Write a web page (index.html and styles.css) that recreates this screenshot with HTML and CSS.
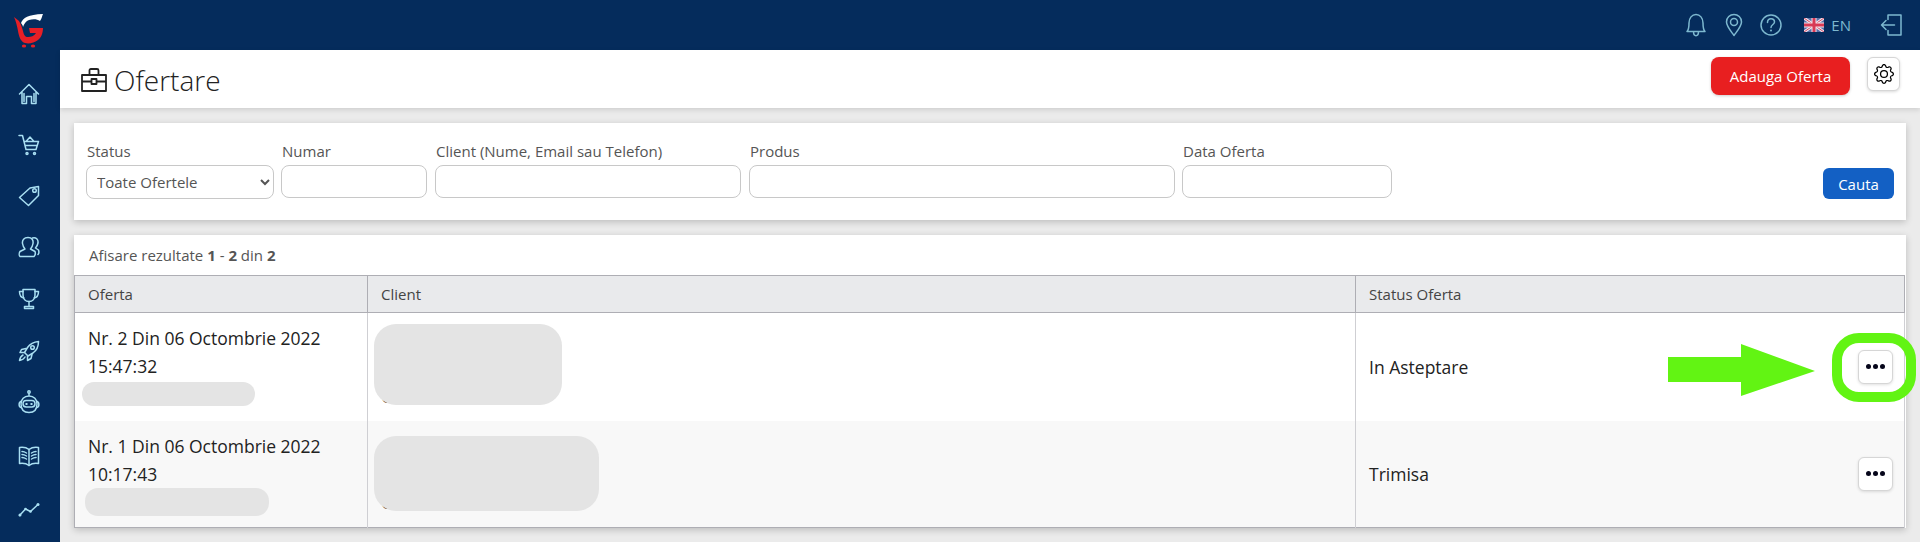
FILE: index.html
```html
<!DOCTYPE html>
<html lang="ro">
<head>
<meta charset="utf-8">
<title>Ofertare</title>
<link rel="stylesheet" href="styles.css">
</head>
<body>
<div class="app">
  <aside class="sidebar">
    <div class="logo">
      <svg width="32" height="36" viewBox="0 0 32 36">
        <path class="logo-red" d="M1 4L6 8C8 11 9 15 10 18C11 22 12 24 15 24C18 24 21 23 23 20L17 20L16 15L30 15C30 20 28 25 25 27C21 30 16 31 12 30C8 29 6 24 5 18C4 13 3 8 1 4Z"/>
        <path class="logo-white" d="M8 10C10 5 15 1.500 30 1C29 3 29 5 27 8C24 6 20 6 16 7C13 8 11 11 10 14C10 13 9 11 8 10Z"/>
        <ellipse class="logo-red" cx="11" cy="33" rx="2.200" ry="1.500"/>
        <ellipse class="logo-red" cx="20" cy="33" rx="2.200" ry="1.500"/>
      </svg>
    </div>
    <nav class="nav">
      <a class="nav-item"><svg width="22" height="22" viewBox="0 0 22 22"><path d="M1.500 11L11 1.500L20.500 11M4 9V20.500H8.500V13.500H13.500V20.500H18V9"/><path d="M6 10.500V18.500M16 10.500V18.500"/></svg></a>
      <a class="nav-item"><svg width="22" height="22" viewBox="0 0 22 22"><path d="M1 1.500H4.500L8 15.500H18L20.500 7.500H6M8 7.500L12 3L16 7.500M7.500 11.500H19"/><circle cx="9" cy="19.500" r="1"/><circle cx="16.500" cy="19.500" r="1"/></svg></a>
      <a class="nav-item"><svg width="22" height="22" viewBox="0 0 22 22"><path d="M1.500 12.500L12 3L20.500 1.500V10.500L10.500 20.500Z"/><circle cx="16.500" cy="5.500" r="1.800"/></svg></a>
      <a class="nav-item"><svg width="22" height="22" viewBox="0 0 22 22"><path d="M10 1.500C14 1.500 15.500 4 15 7.500C14.500 10.500 13.500 12 12.500 13L17 15.500C17.500 17 17 19.500 16 20.500H2C1 19.500 1 17 2 15.500L7 13C6 12 5 10.500 4.500 7.500C4 4 6 1.500 10 1.500Z"/><path d="M14.500 2C18 1 20.500 3.500 20 7C19.500 9.500 18.500 11 17.500 12L20.500 14C21 15.500 21 17.500 20 18.500"/></svg></a>
      <a class="nav-item nudge-1"><svg width="22" height="22" viewBox="0 0 22 22"><path d="M5 1.500H17V7C17 11 14.500 13.500 11 13.500C7.500 13.500 5 11 5 7Z"/><path d="M5 3.500H1.500C1.500 7 3 9.500 6 10M17 3.500H20.500C20.500 7 19 9.500 16 10M11 13.500V18M6.500 20.500H15.500V18.500H6.500Z"/></svg></a>
      <a class="nav-item nudge-1"><svg width="22" height="22" viewBox="0 0 22 22"><path d="M20.500 1.500C15.500 2 12 4 9.500 7.500L6.500 12.500L10 16L15 13C18.500 10.500 20.500 6.500 20.500 1.500Z"/><circle cx="14.500" cy="7.500" r="1.800"/><path d="M8 8.500L3.500 9.500L2 12.500H6.500M14 14.500L13 18.500L9.500 20.500V16M5 15C3 16 2 18 1.500 20.500C4 20 6 19 7 17"/></svg></a>
      <a class="nav-item"><svg width="24" height="24" viewBox="0 0 24 24"><circle cx="12" cy="2" r="1.200"/><path d="M12 3.500V6M12 6C7 6 4 9.500 4 14C4 19.500 7 22.500 12 22.500C17 22.500 20 19.500 20 14C20 9.500 17 6 12 6Z"/><path d="M4 11.500C1.500 12 1.500 17 4 17.500M20 11.500C22.500 12 22.500 17 20 17.500"/><rect x="6" y="10.500" width="12" height="6.500" rx="3.200"/><path class="eyes" d="M8.500 13H10.500V15H8.500ZM13.500 13H15.500V15H13.500Z"/></svg></a>
      <a class="nav-item nudge-3"><svg width="22" height="22" viewBox="0 0 22 22"><path d="M1.500 2.500C5 2 8.500 2.500 11 4.500C13.500 2.500 17 2 20.500 2.500V18.500C17 18 13.500 18.500 11 20.500C8.500 18.500 5 18 1.500 18.500Z"/><path d="M11 4.500V20.500M4 6.500C5.500 6.500 7 7 8.500 8M4 9.500C5.500 9.500 7 10 8.500 11M4 12.500C5.500 12.500 7 13 8.500 14M18 6.500C16.500 6.500 15 7 13.500 8M18 9.500C16.500 9.500 15 10 13.500 11M18 12.500C16.500 12.500 15 13 13.500 14"/></svg></a>
      <a class="nav-item nudge-2"><svg width="22" height="22" viewBox="0 0 22 22"><path d="M1.500 17.500L7.500 11L12.500 13.500L20 6.500"/><circle class="dot" cx="2" cy="17" r="1.500"/><circle class="dot" cx="7.500" cy="11" r="1.300"/><circle class="dot" cx="12.500" cy="13.500" r="1.300"/><circle class="dot" cx="20" cy="6.500" r="1.500"/></svg></a>
    </nav>
  </aside>

  <div class="main">
    <header class="topbar">
      <svg class="top-icon" width="22" height="24" viewBox="0 0 22 24"><path d="M2 18.500C4 16.500 4 14 4 10C4 5 7 1.500 11 1.500C15 1.500 18 5 18 10C18 14 18 16.500 20 18.500ZM8.500 18.500C8.500 24 13.500 24 13.500 18.500"/></svg>
      <svg class="top-icon pin" width="18" height="24" viewBox="0 0 18 24"><path d="M9 22.500C5 17 1.500 13 1.500 9C1.500 4.500 5 1.500 9 1.500C13 1.500 16.500 4.500 16.500 9C16.500 13 13 17 9 22.500Z"/><circle cx="9" cy="9" r="3.500"/></svg>
      <svg class="top-icon" width="22" height="22" viewBox="0 0 22 22"><circle cx="11" cy="11" r="10"/><path d="M7.500 8.500C7.500 6 9 4.700 11 4.700C13 4.700 14.500 6 14.500 8C14.500 10.500 11 10.500 11 13.500"/><circle class="dot-top" cx="11" cy="16.500" r="1"/></svg>
      <div class="lang">
        <svg class="flag" width="20" height="14" viewBox="0 0 20 14"><rect width="20" height="14" fill="#5a6fa8"/><path d="M0 0L20 14M20 0L0 14" stroke="#f3e3ea" stroke-width="3"/><path d="M0 0L20 14M20 0L0 14" stroke="#cf4a66" stroke-width="1"/><path d="M10 0V14M0 7H20" stroke="#f3e3ea" stroke-width="5"/><path d="M10 0V14M0 7H20" stroke="#d83a55" stroke-width="3"/></svg>
        <span class="lang-label">EN</span>
      </div>
      <svg class="top-icon logout" width="22" height="22" viewBox="0 0 22 22"><path d="M8 5.500V1H21V21H8V16.500M14.500 11H1.500M6 6.500L1.500 11L6 15.500"/></svg>
    </header>

    <section class="pagehead">
      <h1 class="title">
        <svg class="title-icon" width="26" height="24" viewBox="0 0 26 24"><path d="M1 7H25V23H1ZM8.500 7V2.500C8.500 1.500 9 1 10 1H16C17 1 17.500 1.500 17.500 2.500V7M1 13.500H10.500M15.500 13.500H25"/><rect x="10.500" y="11" width="5" height="5"/></svg>
        Ofertare
      </h1>
      <div class="head-actions">
        <button class="btn-red">Adauga Oferta</button>
        <button class="btn-gear"><svg width="20" height="20" viewBox="0 0 16 16"><path d="M8 4.754a3.246 3.246 0 1 0 0 6.492 3.246 3.246 0 0 0 0-6.492zM5.754 8a2.246 2.246 0 1 1 4.492 0 2.246 2.246 0 0 1-4.492 0z"/><path d="M9.796 1.343c-.527-1.79-3.065-1.79-3.592 0l-.094.319a.873.873 0 0 1-1.255.52l-.292-.16c-1.64-.892-3.433.902-2.54 2.541l.159.292a.873.873 0 0 1-.52 1.255l-.319.094c-1.79.527-1.79 3.065 0 3.592l.319.094a.873.873 0 0 1 .52 1.255l-.16.292c-.892 1.64.901 3.434 2.541 2.54l.292-.159a.873.873 0 0 1 1.255.52l.094.319c.527 1.79 3.065 1.79 3.592 0l.094-.319a.873.873 0 0 1 1.255-.52l.292.16c1.64.893 3.434-.902 2.54-2.541l-.159-.292a.873.873 0 0 1 .52-1.255l.319-.094c1.79-.527 1.79-3.065 0-3.592l-.319-.094a.873.873 0 0 1-.52-1.255l.16-.292c.893-1.64-.902-3.433-2.541-2.54l-.292.159a.873.873 0 0 1-1.255-.52l-.094-.319zm-2.633.283c.246-.835 1.428-.835 1.674 0l.094.319a1.873 1.873 0 0 0 2.693 1.115l.291-.16c.764-.415 1.6.42 1.184 1.185l-.159.292a1.873 1.873 0 0 0 1.116 2.692l.318.094c.835.246.835 1.428 0 1.674l-.319.094a1.873 1.873 0 0 0-1.115 2.693l.16.291c.415.764-.42 1.6-1.185 1.184l-.291-.159a1.873 1.873 0 0 0-2.693 1.116l-.094.318c-.246.835-1.428.835-1.674 0l-.094-.319a1.873 1.873 0 0 0-2.692-1.115l-.292.16c-.764.415-1.6-.42-1.184-1.185l.159-.291A1.873 1.873 0 0 0 1.945 8.93l-.319-.094c-.835-.246-.835-1.428 0-1.674l.319-.094A1.873 1.873 0 0 0 3.06 4.377l-.16-.292c-.415-.764.42-1.6 1.185-1.184l.292.159a1.873 1.873 0 0 0 2.692-1.115l.094-.319z"/></svg></button>
      </div>
    </section>

    <main class="content">
      <form class="card filters">
        <div class="field f-status">
          <label>Status</label>
          <select class="control select"><option>Toate Ofertele</option></select>
        </div>
        <div class="field f-num">
          <label>Numar</label>
          <input class="control" type="text">
        </div>
        <div class="field f-client">
          <label>Client (Nume, Email sau Telefon)</label>
          <input class="control" type="text">
        </div>
        <div class="field f-prod">
          <label>Produs</label>
          <input class="control" type="text">
        </div>
        <div class="field f-date">
          <label>Data Oferta</label>
          <input class="control" type="text">
        </div>
        <button class="btn-blue" type="button">Cauta</button>
      </form>

      <section class="card results">
        <div class="summary">Afisare rezultate <b>1</b> - <b>2</b> din <b>2</b></div>
        <table class="table">
          <colgroup><col class="c1"><col class="c2"><col></colgroup>
          <thead>
            <tr><th>Oferta</th><th>Client</th><th>Status Oferta</th></tr>
          </thead>
          <tbody>
            <tr class="row-a">
              <td class="cell-offer">Nr. 2 Din 06 Octombrie 2022<br>15:47:32<span class="blob blob-o1"></span></td>
              <td class="cell-client"><span class="peek peek-b">C</span><span class="blob blob-c1"></span></td>
              <td><div class="status"><span>In Asteptare</span><button class="btn-dots"><i></i><i></i><i></i></button></div></td>
            </tr>
            <tr class="row-b">
              <td class="cell-offer">Nr. 1 Din 06 Octombrie 2022<br>10:17:43<span class="blob blob-o2"></span></td>
              <td class="cell-client"><span class="peek peek-t">C</span><span class="peek peek-b2">C</span><span class="blob blob-c2"></span></td>
              <td><div class="status"><span>Trimisa</span><button class="btn-dots"><i></i><i></i><i></i></button></div></td>
            </tr>
          </tbody>
        </table>
      </section>
    </main>
  </div>

  <svg class="annotation" width="252" height="72" viewBox="0 0 252 72">
    <path class="arrow" d="M0 25H73V12L147 39L73 64V50H0Z"/>
    <rect class="ring" x="169" y="6" width="74" height="59" rx="22"/>
  </svg>
</div>
</body>
</html>
```

FILE: styles.css
```css
* { box-sizing: border-box; }
html, body { margin: 0; height: 542px; overflow: hidden; }
body {
  font-family: "Open Sans", "Liberation Sans", sans-serif;
  font-size: 15px;
  color: #222;
  background: #ebebeb;
}
.app { position: relative; display: flex; width: 1920px; height: 542px; overflow: hidden; }

/* sidebar */
.sidebar { width: 60px; flex: none; background: #052c5c; }
.logo { height: 68px; padding: 13px 0 0 13px; }
.logo-red { fill: #e81f26; }
.logo-white { fill: #fff; }
.nav { display: flex; flex-direction: column; }
.nav-item { height: 51px; flex: none; display: flex; align-items: center; justify-content: center; padding-right: 2px; }
.nudge-1 { margin-top: 1px; }
.nudge-2 { margin-top: 2px; }
.nudge-3 { margin-top: 3px; }
.nav-item svg { fill: none; stroke: #a9dff2; stroke-width: 1.500; stroke-linejoin: round; stroke-linecap: round; }
.nav-item .eyes { fill: #a9dff2; stroke: none; }
.nav-item .dot { fill: #a9dff2; stroke: none; }

/* top */
.main { flex: 1; min-width: 0; display: flex; flex-direction: column; }
.topbar { height: 50px; flex: none; background: #052c5c; display: flex; align-items: center; justify-content: flex-end; padding-right: 18px; }
.top-icon { fill: none; stroke: #7db8cf; stroke-width: 1.500; stroke-linejoin: round; stroke-linecap: round; margin-right: 18px; }
.top-icon.pin { margin-right: 17px; }
.top-icon .dot-top { fill: #7db8cf; stroke: none; }
.top-icon.logout { margin: 0; }
.lang { display: flex; align-items: center; gap: 7px; margin-left: 4px; margin-right: 29px; }
.flag { display: block; }
.lang-label { color: #7db8cf; font-size: 15px; }

.pagehead { height: 58px; flex: none; background: #fff; display: flex; align-items: center; justify-content: space-between; padding: 0 20px 0 21px; box-shadow: 0 2px 5px rgba(0,0,0,.12); position: relative; }
.title { margin: 2px 0 0; display: flex; align-items: center; gap: 7px; font-weight: 300; font-size: 28px; line-height: 40px; color: #222; }
.title-icon { fill: none; stroke: #222; stroke-width: 1.800; stroke-linejoin: round; }
.head-actions { display: flex; align-items: flex-start; gap: 17px; height: 38px; margin-top: -6px; }
.btn-red { width: 139px; height: 38px; border: 0; border-radius: 8px; background: #e81f20; color: #fff; font: 500 15px "Open Sans", sans-serif; box-shadow: 0 1px 3px rgba(0,0,0,.2); }
.btn-gear { width: 33px; height: 34px; padding: 0; display: flex; align-items: center; justify-content: center; background: #fff; border: 1px solid #d6d6d6; border-radius: 6px; box-shadow: 0 1px 3px rgba(0,0,0,.15); }

/* cards */
.content { flex: 1; padding: 15px 14px 0; display: flex; flex-direction: column; gap: 15px; }
.card { background: #fff; box-shadow: 0 2px 7px rgba(0,0,0,.2); }
.filters { height: 97px; padding: 15px 12px 0; display: flex; gap: 7px; align-items: flex-start; }
.field { display: flex; flex-direction: column; }
.field label { font-size: 15px; line-height: 26px; margin-bottom: 1px; color: #555; padding-left: 1px; }
.control { height: 33px; border: 1px solid #c8c8c8; border-radius: 8px; background: #fff; font: 15px "Open Sans", sans-serif; color: #555; width: 100%; outline: 0; }
.select { height: 34px; padding-left: 6px; }
.f-status { width: 188px; }
.f-num { width: 146px; }
.f-client { width: 306px; margin-left: 1px; }
.f-prod { width: 426px; margin-left: 1px; }
.f-date { width: 210px; }
.btn-blue { margin-left: auto; margin-top: 30px; width: 71px; height: 31px; border: 0; border-radius: 6px; background: #1360c4; color: #fff; font: 500 15px "Open Sans", sans-serif; }

.results { height: 293px; }
.summary { height: 40px; line-height: 40px; padding-left: 15px; font-size: 15px; color: #555; }
.table { width: 1831px; table-layout: fixed; border-collapse: collapse; font-size: 17.5px; border: 1px solid #aeaeb4; }
.c1 { width: 293px; }
.c2 { width: 988px; }
.table th { height: 37px; padding: 0 13px; background: #e9eaec; font-weight: 400; font-size: 15px; color: #444; text-align: left; border: 1px solid #aeaeb4; }
.table td { padding: 0 13px; line-height: 28px; border-right: 1px solid #cfcfd3; vertical-align: middle; position: relative; }
.row-a td { height: 108px; background: #fff; }
.row-b td { height: 107px; background: #f8f8f8; }
.cell-offer { vertical-align: top !important; padding-top: 11px !important; }
.status { display: flex; align-items: center; justify-content: space-between; margin-right: -2px; }
.btn-dots { width: 35px; height: 34px; padding: 0; display: flex; align-items: center; justify-content: center; gap: 2px; background: #fff; border: 1px solid #d6d6d6; border-radius: 6px; box-shadow: 0 1px 3px rgba(0,0,0,.12); }
.btn-dots i { width: 5px; height: 5px; border-radius: 50%; background: #05051a; }

/* redaction blobs over the data */
.blob { position: absolute; display: block; background: #e4e4e4; }
.blob-o1 { left: 7px; top: 69px; width: 173px; height: 24px; border-radius: 12px; }
.blob-o2 { left: 10px; top: 67px; width: 184px; height: 28px; border-radius: 13px; }
.blob-c1 { left: 6px; top: 11px; width: 188px; height: 81px; border-radius: 22px; }
.blob-c2 { left: 6px; top: 15px; width: 225px; height: 75px; border-radius: 22px; }
.peek { position: absolute; left: 13px; }
.peek-b { top: 69px; }
.peek-t { top: 11px; }
.peek-b2 { top: 67px; }

/* annotation over the page */
.annotation { position: absolute; left: 1668px; top: 332px; }
.arrow { fill: #62f413; }
.ring { fill: none; stroke: #62f413; stroke-width: 10; }
```
